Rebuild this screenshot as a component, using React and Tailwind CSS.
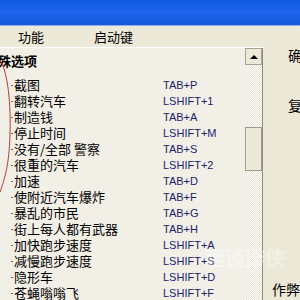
import React from 'react'

const items = [
  ['截图', 'TAB+P'],
  ['翻转汽车', 'LSHIFT+1'],
  ['制造钱', 'TAB+A'],
  ['停止时间', 'LSHIFT+M'],
  ['没有/全部 警察', 'TAB+S'],
  ['很重的汽车', 'LSHIFT+2'],
  ['加速', 'TAB+D'],
  ['使附近汽车爆炸', 'TAB+F'],
  ['暴乱的市民', 'TAB+G'],
  ['街上每人都有武器', 'TAB+H'],
  ['加快跑步速度', 'LSHIFT+A'],
  ['减慢跑步速度', 'LSHIFT+S'],
  ['隐形车', 'LSHIFT+D'],
  ['苍蝇嗡嗡飞', 'LSHIFT+F'],
]

const cjk = { fontFamily: '"Noto Sans CJK SC", sans-serif' }

export default function App() {
  return (
    <div className="relative h-[300px] w-[300px] overflow-hidden bg-[#ECE9D8]">
      {/* title bar */}
      <div className="h-[26px] bg-gradient-to-b from-[#0B5BE0] via-[#1D64EC] to-[#1558DA] border-b border-[#8FAEE8]" />

      <div className="flex">
        <div className="w-[263px] shrink-0">
          {/* column header */}
          <div className="flex h-[22px] items-center border-b border-white pt-[1px] text-[13px] text-black" style={cjk}>
            <span className="ml-[18px]">功能</span>
            <span className="ml-[50px]">启动键</span>
          </div>

          <div className="flex h-[260px]">
            <div className="flex-1 bg-[#F1EFE6] pt-[5px]" style={cjk}>
              <div className="-ml-[2px] h-[16px] text-[13px] font-bold leading-[16px] text-black">殊选项</div>
              <div className="pt-[8px]">
                {items.map(([name, key]) => (
                  <div key={key + name} className="flex h-[16px] items-center">
                    <span className="ml-[11px] mr-[1px] h-px w-[2px] bg-[#666]" />
                    <span className="w-[149px] whitespace-nowrap text-[13px] leading-[16px] text-black">{name}</span>
                    <span className="text-[11px] leading-[16px] text-[#1A1E6E]" style={{ fontFamily: '"Liberation Sans", sans-serif' }}>{key}</span>
                  </div>
                ))}
              </div>
            </div>

            {/* scrollbar */}
            <div className="flex w-[18px] flex-col bg-[repeating-conic-gradient(#ffffff_0%_25%,#E4E1D3_0%_50%)] bg-[length:2px_2px] border-r border-[#8E8B7D]">
              <div className="flex h-[17px] items-center justify-center border border-[#A7A496] bg-[#ECE9D8]">
                <span className="h-0 w-0 border-x-[4px] border-b-[4px] border-x-transparent border-b-black" />
              </div>
              <div className="mt-[62px] h-[44px] border border-[#9E9B8C] bg-[#ECE9D8]" />
            </div>
          </div>
        </div>

        {/* right panel */}
        <div className="relative flex-1 text-[14px] text-black" style={cjk}>
          <div className="ml-[25px] mt-[20px] leading-[18px]">确</div>
          <div className="ml-[25px] mt-[32px] leading-[18px]">复</div>
          <div className="ml-[9px] mt-[166px] whitespace-nowrap leading-[18px]">作弊辅</div>
          <div className="ml-[17px] mt-[4px] h-[6px] border-l border-t border-[#8E8B7D]" />
        </div>
      </div>

      {/* hand-drawn red mark */}
      <svg className="absolute left-0 top-0" width="20" height="200">
        <path d="M0 60 C8 72, 11 105, 10 135 S5 178, 0 192" fill="none" stroke="#B83A3A" strokeWidth="1" />
      </svg>

      {/* watermark */}
      <div className="absolute left-[205px] top-[243px] whitespace-nowrap text-[20px] font-bold text-white/40" style={cjk}>
        趣谈游侠
      </div>
    </div>
  )
}
